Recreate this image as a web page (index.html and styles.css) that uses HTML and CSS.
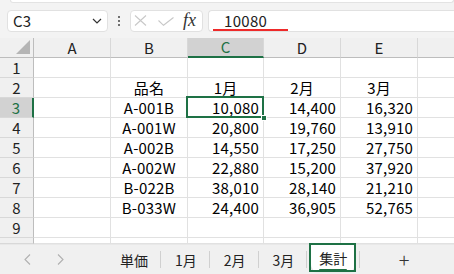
FILE: index.html
```html
<!DOCTYPE html>
<html lang="ja">
<head>
<meta charset="utf-8">
<link rel="stylesheet" href="styles.css">
</head>
<body>
<div class="app">
  <div class="ribbon-edge"></div>
  <div class="formula-bar">
    <div class="namebox">
      <span class="name">C3</span>
      <svg class="chev" width="10" height="6" viewBox="0 0 10 6"><path d="M1 1 L5 5 L9 1" fill="none" stroke="#333" stroke-width="1.2"/></svg>
    </div>
    <div class="dots"><span></span><span></span><span></span></div>
    <div class="fxbox">
      <svg class="ic-x" width="13" height="11" viewBox="0 0 13 11"><path d="M1 0.5 L12 10.5 M12 0.5 L1 10.5" fill="none" stroke="#c8c8c8" stroke-width="1.1"/></svg>
      <svg class="ic-check" width="16" height="9" viewBox="0 0 16 9"><path d="M0.5 3.5 L5.5 8.3 L15.5 0.5" fill="none" stroke="#c8c8c8" stroke-width="1.1"/></svg>
      <span class="fx">fx</span>
    </div>
    <div class="input"><span class="val">10080</span></div>
  </div>

  <div class="sheet">
    <div class="ch corner"><span class="tri"></span></div>
    <div class="ch">A</div>
    <div class="ch">B</div>
    <div class="ch sel">C</div>
    <div class="ch">D</div>
    <div class="ch">E</div>
    <div class="ch last"></div>

    <div class="rh">1</div><div class="c"></div><div class="c"></div><div class="c"></div><div class="c"></div><div class="c"></div><div class="c last"></div>
    <div class="rh">2</div><div class="c"></div><div class="c ctr">品名</div><div class="c ctr">1月</div><div class="c ctr">2月</div><div class="c ctr">3月</div><div class="c last"></div>
    <div class="rh sel">3</div><div class="c"></div><div class="c ctr">A-001B</div><div class="c num active">10,080<span class="handle"></span></div><div class="c num">14,400</div><div class="c num">16,320</div><div class="c last"></div>
    <div class="rh">4</div><div class="c"></div><div class="c ctr">A-001W</div><div class="c num">20,800</div><div class="c num">19,760</div><div class="c num">13,910</div><div class="c last"></div>
    <div class="rh">5</div><div class="c"></div><div class="c ctr">A-002B</div><div class="c num">14,550</div><div class="c num">17,250</div><div class="c num">27,750</div><div class="c last"></div>
    <div class="rh">6</div><div class="c"></div><div class="c ctr">A-002W</div><div class="c num">22,880</div><div class="c num">15,200</div><div class="c num">37,920</div><div class="c last"></div>
    <div class="rh">7</div><div class="c"></div><div class="c ctr">B-022B</div><div class="c num">38,010</div><div class="c num">28,140</div><div class="c num">21,210</div><div class="c last"></div>
    <div class="rh">8</div><div class="c"></div><div class="c ctr">B-033W</div><div class="c num">24,400</div><div class="c num">36,905</div><div class="c num">52,765</div><div class="c last"></div>
    <div class="rh">9</div><div class="c"></div><div class="c"></div><div class="c"></div><div class="c"></div><div class="c"></div><div class="c last"></div>
    <div class="rh"></div><div class="c"></div><div class="c"></div><div class="c"></div><div class="c"></div><div class="c"></div><div class="c last"></div>
  </div>

  <div class="tabbar">
    <div class="nav">
      <svg class="arr" width="7" height="11" viewBox="0 0 7 11"><path d="M6 0.5 L1 5.5 L6 10.5" fill="none" stroke="#b0b0b0" stroke-width="1.1"/></svg>
      <svg class="arr" width="7" height="11" viewBox="0 0 7 11"><path d="M1 0.5 L6 5.5 L1 10.5" fill="none" stroke="#b0b0b0" stroke-width="1.1"/></svg>
    </div>
    <div class="tab">単価</div><span class="sep"></span>
    <div class="tab">1月</div><span class="sep"></span>
    <div class="tab">2月</div><span class="sep"></span>
    <div class="tab">3月</div><span class="sep"></span>
    <div class="tab active"><span class="lbl">集計</span></div><span class="sep"></span>
    <div class="plus">+</div>
  </div>
</div>
</body>
</html>
```
FILE: styles.css
```css
* { box-sizing: border-box; }
html, body { margin: 0; padding: 0; }
body {
  width: 454px;
  height: 274px;
  overflow: hidden;
  background: #f3f3f3;
  font-family: "Noto Sans CJK JP", "Noto Sans", sans-serif;
  color: #000;
}
.app {
  width: 454px;
  height: 274px;
  display: flex;
  flex-direction: column;
  background: #f3f3f3;
}
.ribbon-edge {
  height: 3px;
  margin-left: 10px;
  background: #fff;
  border: 1px solid #e3e3e3;
  border-top: none;
  border-radius: 0 0 4px 4px;
}
.formula-bar {
  margin-top: 7px;
  height: 24px;
  display: flex;
  align-items: stretch;
}
.namebox {
  margin-left: 7px;
  width: 101px;
  background: #fff;
  border: 1px solid #e1e1e1;
  border-radius: 4px;
  display: flex;
  align-items: center;
  justify-content: space-between;
  padding: 0 5px 0 5px;
}
.name { font-size: 15px; line-height: 1; color: #222; letter-spacing: 0.2px; }
.chev { margin-top: 1px; }
.dots {
  width: 22px;
  display: flex;
  flex-direction: column;
  align-items: center;
  justify-content: center;
  gap: 2px;
}
.dots span { width: 2px; height: 2px; background: #444; border-radius: 1px; }
.fxbox {
  width: 73px;
  background: #fff;
  border: 1px solid #e1e1e1;
  border-radius: 4px;
  display: flex;
  align-items: center;
  padding-left: 3px;
}
.ic-x { margin-right: 11px; }
.ic-check { margin-right: 9px; margin-top: 1px; }
.fx {
  font-family: "Liberation Serif", serif;
  font-style: italic;
  font-size: 18px;
  line-height: 1;
  color: #333;
  margin-top: -2px;
}
.input {
  margin-left: 5px;
  flex: 1;
  background: #fff;
  border: 1px solid #e1e1e1;
  border-right: none;
  border-radius: 4px 0 0 4px;
  position: relative;
  display: flex;
  align-items: center;
  padding-left: 15px;
}
.val { font-size: 15px; line-height: 1; color: #222; letter-spacing: 0.3px; }
.input::after {
  content: "";
  position: absolute;
  left: 4px;
  width: 75px;
  top: 18px;
  height: 2px;
  background: #ee2a2a;
}

.sheet {
  margin-top: 6px;
  display: grid;
  grid-template-columns: 34px 77px 77px 76px 77px 77px 1fr;
  grid-template-rows: 20px repeat(9, 20px) 6px;
  background: #fff;
}
.ch {
  background: #f0f0f0;
  border-right: 1px solid #d8d8d8;
  border-bottom: 1px solid #bdbdbd;
  font-size: 15px;
  line-height: 19px;
  text-align: center;
  color: #222;
}
.ch.last { border-right: none; }
.ch.corner { position: relative; border-right-color: #bdbdbd; }
.tri {
  position: absolute;
  right: 3px;
  bottom: 3px;
  width: 14px;
  height: 14px;
  background: #b5b5b5;
  clip-path: polygon(100% 0, 100% 100%, 0 100%);
}
.ch.sel {
  background: #d2d2d2;
  color: #1e7145;
  border-bottom: 2px solid #1e7145;
  line-height: 18px;
}
.rh {
  background: #f0f0f0;
  border-right: 1px solid #bdbdbd;
  border-bottom: 1px solid #d8d8d8;
  font-size: 15px;
  line-height: 19px;
  text-align: center;
  color: #222;
}
.rh.sel {
  background: #d2d2d2;
  color: #1e7145;
  border-right: 2px solid #1e7145;
}
.c {
  border-right: 1px solid #e1e1e1;
  border-bottom: 1px solid #e1e1e1;
  font-size: 15px;
  line-height: 19px;
  white-space: nowrap;
  letter-spacing: 0.2px;
}
.c.last { border-right: none; }
.ctr { text-align: center; }
.num { text-align: right; padding-right: 4px; }
.active { position: relative; }
.active::before {
  content: "";
  position: absolute;
  left: -2px;
  top: -2px;
  right: -1px;
  bottom: -1px;
  border: 2px solid #1e7145;
  pointer-events: none;
}
.handle {
  position: absolute;
  right: -4px;
  bottom: -4px;
  width: 6px;
  height: 6px;
  background: #1e7145;
  border: 1px solid #fff;
}

.tabbar {
  flex: 1;
  display: flex;
  align-items: stretch;
  background: #f0f0f0;
  border-top: 1px solid #e8e8e8;
}
.nav {
  width: 106px;
  display: flex;
  align-items: center;
  padding-left: 24px;
  gap: 26px;
}
.tab {
  display: flex;
  align-items: center;
  padding: 0 12px 0 14px;
  font-size: 14px;
  color: #222;
}
.sep {
  width: 1px;
  background: #d0d0d0;
  margin: 6px 0 6px;
}
.tab.active {
  background: #fff;
  margin: 0 4px 3px 4px;
  padding: 0 8px;
  border-radius: 0 0 6px 6px;
  box-shadow: 0 1px 2px rgba(0,0,0,0.10);
}
.tab.active .lbl {
  position: relative;
  color: #222;
}
.tab.active .lbl::after {
  content: "";
  position: absolute;
  left: 0;
  right: 0;
  bottom: -3px;
  height: 2px;
  background: #1e7145;
  border-radius: 1px;
}
.plus {
  flex: 1;
  display: flex;
  align-items: center;
  justify-content: center;
  font-size: 20px;
  font-weight: 300;
  color: #333;
  padding-right: 6px;
}
```
